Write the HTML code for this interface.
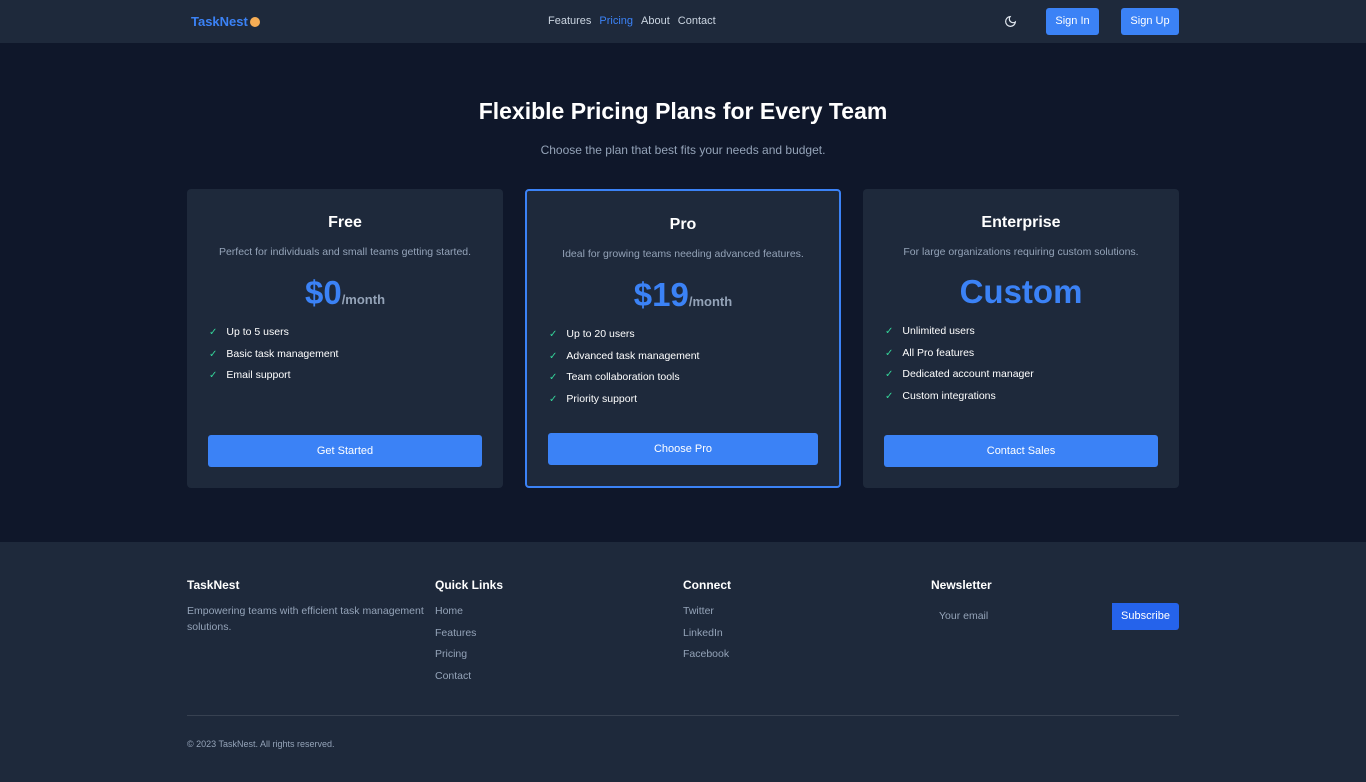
<!DOCTYPE html>
<html><head><meta charset="utf-8"><style>
*{box-sizing:border-box;margin:0;padding:0}
body{width:1366px;height:782px;background:#0f172a;font-family:"Liberation Sans","DejaVu Sans",sans-serif;color:#fff;overflow:hidden;position:relative}
.abs{position:absolute}
nav{position:absolute;left:0;top:0;width:1366px;height:43px;background:#1e293b}
.logo{left:191px;top:14px;font-size:13px;font-weight:bold;color:#3b82f6}
.dot{display:inline-block;width:10px;height:10px;border-radius:50%;background:#f6ad55;vertical-align:-1px;margin-left:2px}
.links{left:548px;top:15px;font-size:11px;color:#cbd5e1}
.links span{margin-right:8px}
.btn{background:#3b82f6;color:#fff;border-radius:3px;font-size:11px;text-align:center}
h1{position:absolute;left:0;width:1366px;top:98px;text-align:center;font-size:23px;font-weight:bold}
.sub{left:0;width:1366px;top:143px;text-align:center;font-size:12px;color:#94a3b8}
.card{position:absolute;top:189px;width:316px;height:299px;background:#1e293b;border-radius:4px}
.card h3{position:absolute;left:0;width:100%;text-align:center;font-size:16px;font-weight:bold}
.card .d{position:absolute;left:0;width:100%;text-align:center;font-size:10.5px;color:#94a3b8}
.card .p{position:absolute;left:0;width:100%;text-align:center;font-size:33px;font-weight:bold;color:#3b82f6}
.p small{font-size:13px;color:#94a3b8}
.card ul{position:absolute;left:22px;list-style:none;font-size:10.5px}
.card li{height:21.5px}
.card li:before{content:"✓";color:#34d399;margin-right:9px;font-size:10px}
.card .b{position:absolute;left:21px;width:274px;height:32px;line-height:32px}
.fh{font-size:12px;font-weight:bold;top:578px}
.fl{font-size:10.5px;color:#94a3b8;line-height:21.5px}
</style></head><body>
<nav>
<div class="abs logo">TaskNest<span class="dot"></span></div>
<div class="abs links"><span>Features</span><span style="color:#3b82f6">Pricing</span><span>About</span><span>Contact</span></div>
<svg class="abs" style="left:1004px;top:15px" width="13" height="13" viewBox="0 0 24 24" fill="none" stroke="#e2e8f0" stroke-width="2.2" stroke-linecap="round"><path d="M21 12.8A9 9 0 1 1 11.2 3a7 7 0 0 0 9.8 9.8z"/></svg>
<div class="abs btn" style="left:1046px;top:8px;width:53px;height:27px;line-height:27px">Sign In</div>
<div class="abs btn" style="left:1121px;top:8px;width:58px;height:27px;line-height:27px">Sign Up</div>
</nav>
<h1>Flexible Pricing Plans for Every Team</h1>
<div class="abs sub">Choose the plan that best fits your needs and budget.</div>

<div class="card" style="left:187px">
<h3 style="top:25px">Free</h3>
<div class="d" style="top:57px">Perfect for individuals and small teams getting started.</div>
<div class="p" style="top:85px">$0<small>/month</small></div>
<ul style="top:137px"><li>Up to 5 users</li><li>Basic task management</li><li>Email support</li></ul>
<div class="b btn" style="top:246px">Get Started</div>
</div>
<div class="card" style="left:525px;border:2px solid #3b82f6">
<h3 style="top:25px">Pro</h3>
<div class="d" style="top:57px">Ideal for growing teams needing advanced features.</div>
<div class="p" style="top:85px">$19<small>/month</small></div>
<ul style="top:137px"><li>Up to 20 users</li><li>Advanced task management</li><li>Team collaboration tools</li><li>Priority support</li></ul>
<div class="b btn" style="top:242px;left:21px;width:270px">Choose Pro</div>
</div>
<div class="card" style="left:863px">
<h3 style="top:25px">Enterprise</h3>
<div class="d" style="top:57px">For large organizations requiring custom solutions.</div>
<div class="p" style="top:84px">Custom</div>
<ul style="top:136px"><li>Unlimited users</li><li>All Pro features</li><li>Dedicated account manager</li><li>Custom integrations</li></ul>
<div class="b btn" style="top:246px">Contact Sales</div>
</div>

<div class="abs" style="left:0;top:542px;width:1366px;height:240px;background:#1e293b"></div>
<div class="abs fh" style="left:187px">TaskNest</div>
<div class="abs fl" style="left:187px;top:603px;width:250px;line-height:16px">Empowering teams with efficient task management solutions.</div>
<div class="abs fh" style="left:435px">Quick Links</div>
<div class="abs fl" style="left:435px;top:601px">Home<br>Features<br>Pricing<br>Contact</div>
<div class="abs fh" style="left:683px">Connect</div>
<div class="abs fl" style="left:683px;top:601px">Twitter<br>LinkedIn<br>Facebook</div>
<div class="abs fh" style="left:931px">Newsletter</div>
<div class="abs" style="left:939px;top:610px;font-size:10.5px;color:#94a3b8">Your email</div>
<div class="abs" style="left:1112px;top:603px;width:67px;height:27px;line-height:27px;background:#2563eb;border-radius:0 3px 3px 0;font-size:11px;text-align:center">Subscribe</div>
<div class="abs" style="left:187px;top:715px;width:992px;height:1px;background:#374151"></div>
<div class="abs" style="left:187px;top:739px;font-size:9px;color:#94a3b8">© 2023 TaskNest. All rights reserved.</div>
</body></html>
